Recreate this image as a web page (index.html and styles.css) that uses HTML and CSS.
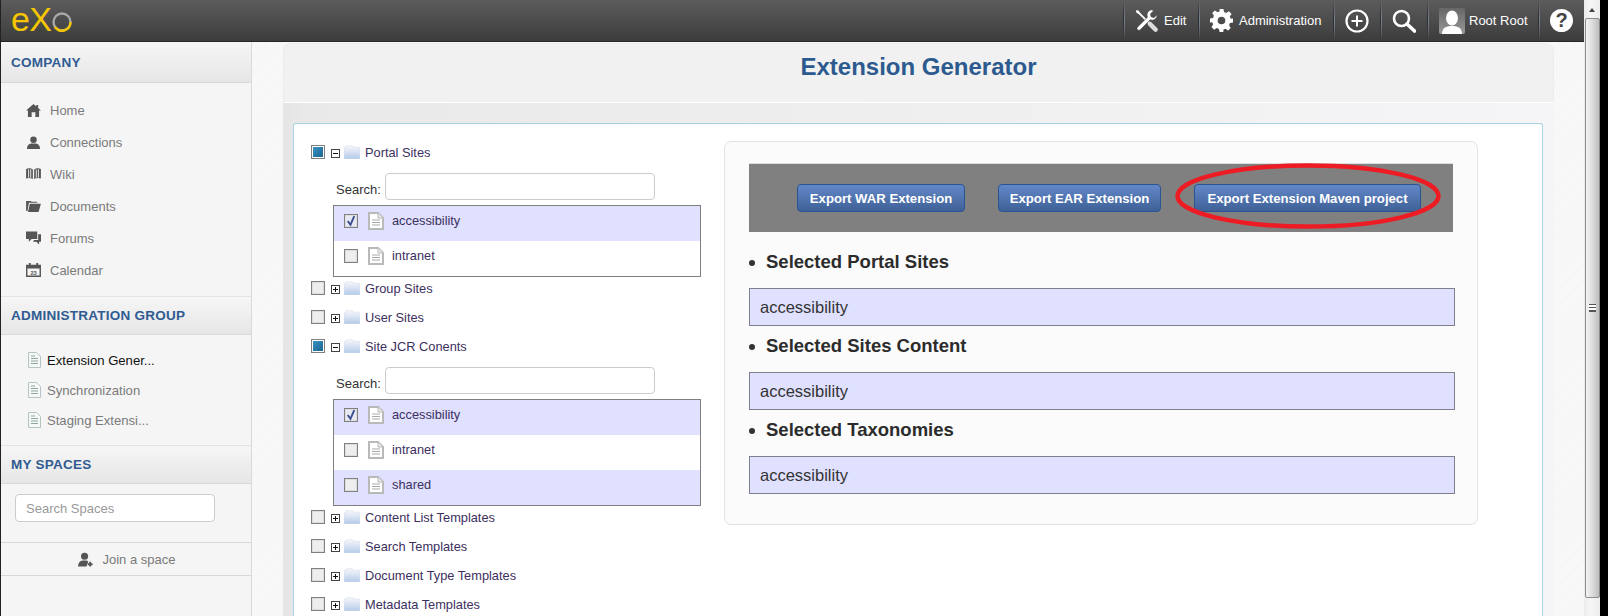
FILE: index.html
```html
<!DOCTYPE html>
<html lang="en">
<head>
<meta charset="utf-8">
<title>Extension Generator</title>
<link rel="stylesheet" href="styles.css">
</head>
<body>
<svg class="defs" width="0" height="0" aria-hidden="true">
  <defs>
    <linearGradient id="fold" x1="0" y1="0" x2="0" y2="1"><stop offset="0" stop-color="#f6f6f6"/><stop offset=".3" stop-color="#e6ecf6"/><stop offset="1" stop-color="#b4cbe9"/></linearGradient>
    <symbol id="folder" viewBox="0 0 16 14"><path d="M0 3a1 1 0 0 1 1-1h1l1-2h5l1 2h6a1 1 0 0 1 1 1v10a1 1 0 0 1-1 1H1a1 1 0 0 1-1-1z" fill="url(#fold)" stroke="#d4dce8" stroke-width=".5"/></symbol>
    <symbol id="doc" viewBox="0 0 16 18"><path d="M1 1h9l5 5v11H1z" fill="#fff" stroke="#b9b9b9" stroke-width="2"/><path d="M10 1v5h5" fill="#e8e8e8" stroke="#b9b9b9"/><path d="M4 8h8M4 10.500h8M4 13h8" stroke="#a9a9a9"/></symbol>
    <symbol id="page" viewBox="0 0 13 16"><path d="M.5.500h8l4 4v11H.5z" fill="#f4f8f6" stroke="#b4c4c0"/><path d="M3 4h4M3 6.500h7M3 9h7M3 11.500h7" stroke="#8fa5a0"/></symbol>
  </defs>
</svg>
<div class="window">
  <div class="app">
    <header class="topbar">
      <div class="logo">
        <span class="logo-e">eX</span>
        <svg class="logo-o" viewBox="0 0 20 20" width="20" height="20"><circle cx="10" cy="10" r="8.500" fill="none" stroke="#a8a8a8" stroke-width="2.400"/><path d="M18.500 10A8.500 8.500 0 0 1 3 15" fill="none" stroke="#f6c600" stroke-width="2.400"/></svg>
      </div>
      <nav class="tools">
        <a class="tool tool-edit">
          <svg viewBox="0 0 24 24" width="23" height="23"><path d="M2.500 2.500l13 13" stroke="#fff" stroke-width="2"/><path d="M1 1l3 .8.800 2.200-1 1-2.200-.8z" fill="#fff"/><path d="M15.500 15.500l6 6" stroke="#ddd" stroke-width="4.500" stroke-linecap="round"/><path fill="#fff" stroke="#444" stroke-width=".6" d="M17.500 .8a5.500 5.500 0 0 0-4.500 7.700L2.500 19a2 2 0 0 0 2.800 2.800L15.800 11.300a5.500 5.500 0 0 0 7.400-5.300l-3.500 3-3-1-.5-3 3.300-3.200z"/></svg>
          <span>Edit</span>
        </a>
        <a class="tool tool-admin">
          <svg viewBox="0 0 24 24" width="23" height="23"><path fill="#fff" fill-rule="evenodd" d="M10 0h4l.7 3.200 2.200.9 2.800-1.800 2.800 2.800-1.800 2.800.9 2.200L24 10v4l-3.200.7-.9 2.200 1.800 2.800-2.800 2.800-2.800-1.800-2.200.9L14 24h-4l-.7-3.200-2.200-.9-2.800 1.800-2.800-2.800 1.800-2.800-.9-2.200L0 14v-4l3.200-.7.9-2.200-1.800-2.800 2.800-2.800 2.800 1.800 2.200-.9zM12 8a4 4 0 1 0 0 8 4 4 0 0 0 0-8z"/></svg>
          <span>Administration</span>
        </a>
        <a class="tool tool-icon">
          <svg viewBox="0 0 24 24" width="24" height="24"><circle cx="12" cy="12" r="10.500" fill="none" stroke="#fff" stroke-width="2.200"/><path d="M12 6.500v11M6.500 12h11" stroke="#fff" stroke-width="2"/></svg>
        </a>
        <a class="tool tool-icon">
          <svg viewBox="0 0 24 24" width="24" height="24"><circle cx="9.500" cy="9.500" r="7.500" fill="none" stroke="#fff" stroke-width="2.600"/><path d="M15 15l7.500 7" stroke="#fff" stroke-width="3.600" stroke-linecap="round"/></svg>
        </a>
        <a class="tool tool-user">
          <span class="avatar"><svg viewBox="0 0 26 26" width="26" height="26"><ellipse cx="13" cy="10" rx="6" ry="7.500" fill="#fff"/><path d="M3 26c0-6 4-8 10-8s10 2 10 8z" fill="#fff"/></svg></span>
          <span>Root Root</span>
        </a>
        <a class="tool tool-help">
          <span class="help">?</span>
        </a>
      </nav>
    </header>
    <div class="body">
      <aside class="sidebar">
        <h2 class="side-head side-first">COMPANY</h2>
        <ul class="side-nav">
          <li><svg viewBox="0 0 16 14" width="15" height="13"><path fill="#555" d="M8 0l3 2.600V1h2v3.300L16 7h-2v7h-4V9H6v5H2V7H0z"/></svg>Home</li>
          <li><svg viewBox="0 0 14 14" width="15" height="13"><circle cx="7" cy="4" r="3.500" fill="#555"/><path fill="#555" d="M0 14c0-4 2-5.500 4.500-6h5C12 8.500 14 10 14 14z"/></svg>Connections</li>
          <li><svg viewBox="0 0 16 13" width="15" height="12"><path fill="#555" d="M0 1c2.500-1 5-1 7.300.5V12C5 10.600 2.500 10.600 0 11.500zM16 1c-2.500-1-5-1-7.300.5V12c2.300-1.400 4.800-1.400 7.300-.5z"/><path stroke="#f5f5f5" d="M2.700 1.500v9M5 1.500v9M11 1.500v9M13.300 1.500v9"/></svg>Wiki</li>
          <li><svg viewBox="0 0 16 13" width="15" height="12"><path fill="#555" d="M0 1h5l1 1h6v1H3L1.500 12H0z"/><path fill="#555" d="M4 4h12l-2.500 9H2z"/></svg>Documents</li>
          <li><svg viewBox="0 0 16 14" width="15" height="14"><path fill="#555" d="M0 0h12v8H6l-3 3V8H0z"/><path fill="#555" d="M13 3h3v8h-2v3l-3-3H7.500l1-2H13z"/></svg>Forums</li>
          <li><svg viewBox="0 0 16 15" width="15" height="14"><path fill="#555" d="M0 2h3V0h2v2h6V0h2v2h3v13H0zM1.500 6v7.500h13V6z"/><text x="8" y="12.800" text-anchor="middle" class="cal-num">23</text></svg>Calendar</li>
        </ul>
        <div class="side-sep">
          <h2 class="side-head">ADMINISTRATION GROUP</h2>
          <ul class="side-pages">
            <li class="on"><svg width="13" height="16"><use href="#page"/></svg>Extension Gener...</li>
            <li><svg width="13" height="16"><use href="#page"/></svg>Synchronization</li>
            <li><svg width="13" height="16"><use href="#page"/></svg>Staging Extensi...</li>
          </ul>
        </div>
        <div class="side-sep">
          <h2 class="side-head">MY SPACES</h2>
          <div class="space-search"><input class="space-input" type="text" placeholder="Search Spaces"></div>
          <div class="join">
            <svg viewBox="0 0 16 15" width="15" height="15"><circle cx="7" cy="4" r="3.800" fill="#555"/><path fill="#555" d="M0 15c0-4 2-6 5-6.500h4c1 .3 1.500.7 2 1.500L9 15z"/><path stroke="#555" stroke-width="2" d="M13 10v5M10.500 12.500h5"/></svg>
            Join a space
          </div>
        </div>
      </aside>
      <main class="main">
        <section class="card">
          <div class="card-title"><h1>Extension Generator</h1></div>
          <div class="card-body">
            <div class="panel">
              <div class="tree">
                <div class="row row-open"><span class="cb cb-tri"></span><span class="tg tg-minus"></span><svg class="fo" width="16" height="14"><use href="#folder"/></svg>Portal Sites</div>
                <div class="filter"><label>Search:</label><input class="filter-input" type="text"></div>
                <div class="list">
                  <div class="item alt"><span class="cb cb-on"><svg viewBox="0 0 11 11" width="12" height="12"><path d="M2.500 5.500l2.500 3.500 3.500-8" fill="none" stroke="#3f4f93" stroke-width="1.800"/></svg></span><svg class="dc" width="16" height="18"><use href="#doc"/></svg>accessibility</div>
                  <div class="item"><span class="cb"></span><svg class="dc" width="16" height="18"><use href="#doc"/></svg>intranet</div>
                </div>
                <div class="row"><span class="cb"></span><span class="tg tg-plus"></span><svg class="fo" width="16" height="14"><use href="#folder"/></svg>Group Sites</div>
                <div class="row"><span class="cb"></span><span class="tg tg-plus"></span><svg class="fo" width="16" height="14"><use href="#folder"/></svg>User Sites</div>
                <div class="row row-open"><span class="cb cb-tri"></span><span class="tg tg-minus"></span><svg class="fo" width="16" height="14"><use href="#folder"/></svg>Site JCR Conents</div>
                <div class="filter"><label>Search:</label><input class="filter-input" type="text"></div>
                <div class="list">
                  <div class="item alt"><span class="cb cb-on"><svg viewBox="0 0 11 11" width="12" height="12"><path d="M2.500 5.500l2.500 3.500 3.500-8" fill="none" stroke="#3f4f93" stroke-width="1.800"/></svg></span><svg class="dc" width="16" height="18"><use href="#doc"/></svg>accessibility</div>
                  <div class="item"><span class="cb"></span><svg class="dc" width="16" height="18"><use href="#doc"/></svg>intranet</div>
                  <div class="item alt"><span class="cb"></span><svg class="dc" width="16" height="18"><use href="#doc"/></svg>shared</div>
                </div>
                <div class="row"><span class="cb"></span><span class="tg tg-plus"></span><svg class="fo" width="16" height="14"><use href="#folder"/></svg>Content List Templates</div>
                <div class="row"><span class="cb"></span><span class="tg tg-plus"></span><svg class="fo" width="16" height="14"><use href="#folder"/></svg>Search Templates</div>
                <div class="row"><span class="cb"></span><span class="tg tg-plus"></span><svg class="fo" width="16" height="14"><use href="#folder"/></svg>Document Type Templates</div>
                <div class="row"><span class="cb"></span><span class="tg tg-plus"></span><svg class="fo" width="16" height="14"><use href="#folder"/></svg>Metadata Templates</div>
              </div>
              <div class="summary">
                <div class="actions">
                  <button class="btn btn-war">Export WAR Extension</button>
                  <button class="btn btn-ear">Export EAR Extension</button>
                  <button class="btn btn-maven">Export Extension Maven project</button>
                  <svg class="ring" viewBox="0 0 266 66" width="266" height="66"><ellipse cx="133" cy="33" rx="130.500" ry="30.500" fill="none" stroke="#ed1c24" stroke-width="4.500"/></svg>
                </div>
                <ul class="sel-list">
                  <li>
                    <h3>Selected Portal Sites</h3>
                    <div class="sel-box">accessibility</div>
                  </li>
                  <li>
                    <h3>Selected Sites Content</h3>
                    <div class="sel-box">accessibility</div>
                  </li>
                  <li>
                    <h3>Selected Taxonomies</h3>
                    <div class="sel-box">accessibility</div>
                  </li>
                </ul>
              </div>
            </div>
          </div>
        </section>
      </main>
    </div>
  </div>
  <div class="scrollbar">
    <div class="sb-up"></div>
    <div class="sb-thumb"><span class="grip"></span></div>
  </div>
  <div class="edge"></div>
</div>
</body>
</html>
```
FILE: styles.css
```css
* { box-sizing: border-box; }
html, body { margin: 0; padding: 0; height: 100%; overflow: hidden; background: #fff; }
body { font-family: "Liberation Sans", Arial, sans-serif; font-size: 13px; color: #333; }
.defs { position: absolute; }
ul { list-style: none; margin: 0; padding: 0; }
h1, h2, h3 { margin: 0; }

.window { display: flex; width: 1608px; height: 616px; }
.app { width: 1584px; height: 616px; display: flex; flex-direction: column; border-left: 1px solid #222; overflow: hidden; }
.scrollbar { width: 16px; background: linear-gradient(90deg, #ececec, #f6f6f6 40%, #ececec); display: flex; flex-direction: column; align-items: center; }
.edge { width: 8px; background: #000; }
.sb-up { height: 18px; flex: none; width: 100%; position: relative; }
.sb-up::after { content: ""; position: absolute; left: 5px; top: 8px; border: 3px solid transparent; border-bottom: 4px solid #444; border-top: 0; }
.sb-thumb { height: 580px; flex: none; width: 15px; border: 1px solid #8c8c8c; border-radius: 2px; background: linear-gradient(90deg, #f4f4f4, #dcdcdc 50%, #bdbdbd); display: flex; align-items: center; justify-content: center; }
.grip { width: 7px; height: 8px; border-top: 1px solid #555; border-bottom: 1px solid #555; background: linear-gradient(#fff 0 2px, #555 2px 3px, #fff 3px 5px, #555 5px 6px, #fff 6px); }

.topbar { height: 42px; flex: none; display: flex; justify-content: space-between; background: linear-gradient(#5c5c5c, #3c3c3c); border-bottom: 1px solid #22282c; color: #fff; }
.logo { display: flex; align-items: center; padding-left: 10px; height: 38px; }
.logo-e { font-family: "Liberation Sans", sans-serif; font-size: 34px; line-height: 40px; height: 40px; color: #f6c600; letter-spacing: -.6px; }
.logo-o { margin-left: 1px; margin-top: 5px; }
.tools { display: flex; align-items: center; }
.tool { height: 41px; flex: none; display: flex; align-items: center; gap: 6px; padding-left: 12px; background: linear-gradient(transparent, #7b8794 50%, transparent) no-repeat 1px 0 / 1px 100%, linear-gradient(transparent, #2a2a2a 50%, transparent) no-repeat 0 0 / 1px 100%; font-size: 13px; color: #fff; }
.tool-edit { width: 75px; }
.tool-admin { width: 135px; }
.tool-icon { width: 47px; }
.tool-user { width: 111px; gap: 4px; }
.tool-help { width: 46px; }
.avatar { width: 26px; height: 26px; border-radius: 2px; background: linear-gradient(#666, #999); display: block; overflow: hidden; }
.avatar svg { display: block; }
.help { width: 23px; height: 23px; border-radius: 50%; background: #fff; color: #444; font-weight: bold; font-size: 20px; line-height: 23px; text-align: center; display: block; }

.body { flex: 1; display: flex; min-height: 0; }
.sidebar { width: 251px; flex: none; background: #f5f5f5; border-right: 1px solid #d9d9d9; }
.side-head { height: 38px; padding-left: 10px; font-size: 13.5px; line-height: 38px; color: #2f5b92; background: linear-gradient(#f6f6f6, #e6e6e6); border-bottom: 1px solid #d8d8d8; letter-spacing: .25px; }
.side-first { height: 41px; line-height: 42px; }
.side-nav { padding: 11px 0 10px 25px; border-bottom: 1px solid #e4e4e4; }
.side-nav li { height: 32px; display: flex; align-items: center; gap: 9px; font-size: 13px; color: #7a7a7a; }
.cal-num { font-size: 6px; fill: #555; font-family: "Liberation Sans", sans-serif; font-weight: bold; }
.side-pages { padding: 10px 0 10px 27px; border-bottom: 1px solid #e4e4e4; }
.side-pages li { height: 30px; display: flex; align-items: center; gap: 6px; font-size: 13.1px; color: #7a7a7a; }
.side-pages li.on { color: #111; }
.space-search { padding: 10px 0 20px 14px; border-bottom: 1px solid #d8d8d8; }
.space-input { display: block; width: 200px; height: 28px; border: 1px solid #ccc; border-radius: 4px; padding: 0 10px; font: 13px "Liberation Sans", sans-serif; background: #fff; }
.space-input::placeholder { color: #999; opacity: 1; }
.join { height: 33px; display: flex; align-items: center; justify-content: center; gap: 10px; color: #7a7a7a; font-size: 13px; border-bottom: 1px solid #d8d8d8; padding-left: 1px; }

.main { flex: 1; min-width: 0; padding: 1px 30px 0 31px; background: #f8f8f8 repeating-linear-gradient(135deg, #f5f5f5 0 1px, #f9f9f9 1px 3px); }
.card { height: 100%; display: flex; flex-direction: column; border-radius: 8px 8px 0 0; overflow: hidden; background: linear-gradient(90deg, #e5e5e5, #e9e9e9 2%, #f5f5f7); }
.card-title { height: 60px; flex: none; background: #f1f1f1; border: 1px solid #ececec; border-bottom: 1px solid #fff; border-radius: 8px 8px 0 0; text-align: center; }
.card-title h1 { font-size: 24px; line-height: 46px; color: #2c5a8f; }
.card-body { flex: 1; padding: 20px 11px 0 10px; min-height: 0; }
.panel { height: 100%; display: flex; background: #fff; border: 1px solid #a9d3e4; border-bottom: 0; border-radius: 3px 3px 0 0; overflow: hidden; }

.tree { width: 430px; flex: none; padding: 17px 0 0 17px; }
.row { height: 22px; margin-bottom: 7px; display: flex; align-items: center; font-size: 12.8px; color: #3c3060; white-space: nowrap; }
.row-open { margin-bottom: 10px; }
.cb { width: 14px; height: 14px; flex: none; display: block; border: 1px solid #808080; background: #eee; box-shadow: inset 0 0 0 1px #ddd; }
.cb-tri { background: linear-gradient(135deg, #3a98c8, #1a5f8c); box-shadow: inset 0 0 0 1px #fff; }
.cb-on { background: #e9e9f4; position: relative; }
.cb-on svg { display: block; }
.tg { width: 9px; height: 9px; flex: none; margin: 2px 4px 0 6px; border: 1px solid #444; background: #fff; position: relative; }
.tg::before { content: ""; position: absolute; left: 1px; right: 1px; top: 3px; height: 1px; background: #111; }
.tg-plus::after { content: ""; position: absolute; top: 1px; bottom: 1px; left: 3px; width: 1px; background: #111; }
.fo { flex: none; margin-right: 5px; }
.filter { display: flex; align-items: center; height: 27px; margin: 0 0 5px 25px; font-size: 13px; color: #333; }
.filter label { width: 49px; padding-top: 5px; }
.filter-input { width: 270px; height: 27px; border: 1px solid #ccc; border-radius: 4px; background: #fff; padding: 0; }
.list { width: 368px; margin-left: 22px; border: 1px solid #7f7f7f; }
.item { height: 35px; display: flex; align-items: center; padding: 0 0 6px 10px; font-size: 12.8px; color: #3c3060; }
.item.alt { background: #e0e0ff; }
.dc { flex: none; margin: 0 8px 0 10px; }

.summary { width: 754px; height: 384px; flex: none; margin: 17px 0 0 0; background: #fbfbfb; border: 1.500px solid #e3e3e3; border-radius: 7px; padding: 21px 0 0 24px; }
.actions { width: 704px; height: 69px; background: #808080; border-top: 1px solid #ddd; position: relative; display: flex; align-items: center; padding: 0 0 0 48px; }
.btn { height: 28px; padding: 0; border: 1px solid #2a5492; border-radius: 4px; background: linear-gradient(#6388c8, #3f6197); color: #fff; font: bold 13.15px "Liberation Sans", sans-serif; text-align: center; white-space: nowrap; }
.btn-war { width: 168px; margin-right: 33px; }
.btn-ear { width: 163px; margin-right: 33px; }
.btn-maven { width: 227px; }
.ring { position: absolute; left: 426px; top: -1px; pointer-events: none; }
.sel-list { width: 706px; }
.sel-list li { position: relative; }
.sel-list h3 { font-size: 18.5px; line-height: 24px; padding: 18px 0 14px 17px; color: #2c2c2c; position: relative; }
.sel-list li + li h3 { padding: 8px 0 14px 17px; }
.sel-list h3::before { content: ""; position: absolute; left: 0; bottom: 22px; width: 6px; height: 6px; border-radius: 50%; background: #333; }
.sel-box { height: 38px; border: 1px solid #7f7f8f; background: #e0e0ff; padding-left: 10px; font-size: 16.5px; line-height: 36px; color: #333; }
```
